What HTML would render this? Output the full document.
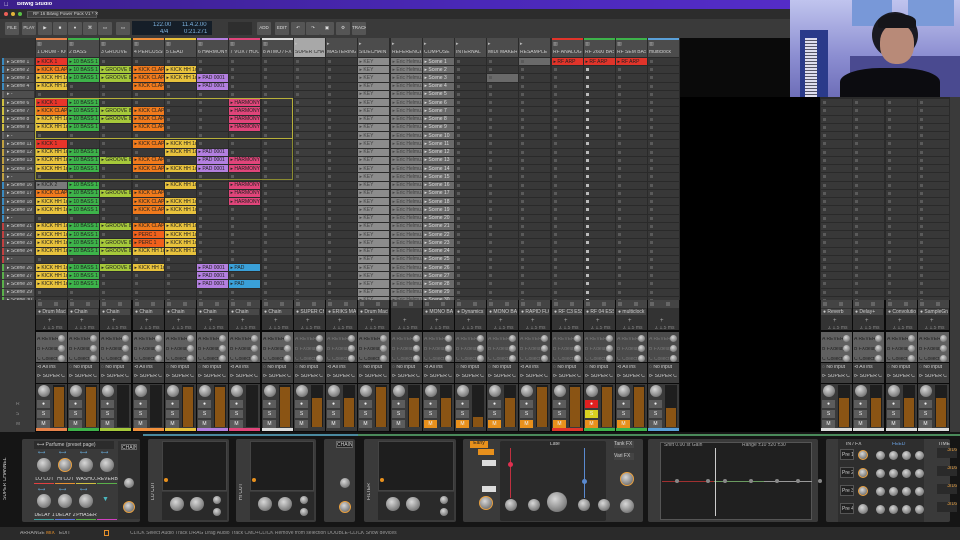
<!DOCTYPE html>
<html><head><meta charset="utf-8">
<style>
*{margin:0;padding:0;box-sizing:border-box}
body{width:960px;height:540px;overflow:hidden;background:#0a0a0a;font-family:"Liberation Sans",sans-serif;color:#ddd;position:relative}
.a{position:absolute}
.t{font-size:5px;white-space:nowrap;overflow:hidden;line-height:1}
.knob{position:absolute;border-radius:50%;background:radial-gradient(circle at 40% 35%,#d8d8d8,#8a8a8a 60%,#555);}
</style></head><body>
<!-- menu bar -->
<div class="a" style="left:0;top:0;width:960px;height:9px;background:linear-gradient(90deg,#3b1f8a,#4a28b8 50%,#5a2fd0)"></div>
<div class="a t" style="left:4px;top:2px;font-size:6px;color:#fff">&#63743;</div>
<div class="a t" style="left:17px;top:2px;font-size:5.5px;color:#fff;font-weight:bold">Bitwig Studio</div>
<div class="a" style="left:0;top:9px;width:790px;height:10px;background:#2c2c2c"></div>
<div class="a" style="left:4px;top:12px;width:4px;height:4px;border-radius:50%;background:#ec5f57"></div>
<div class="a" style="left:11px;top:12px;width:4px;height:4px;border-radius:50%;background:#e0b43a"></div>
<div class="a" style="left:18px;top:12px;width:4px;height:4px;border-radius:50%;background:#5bc246"></div>
<div class="a" style="left:27px;top:11px;width:70px;height:7px;background:#3e3e3e;border:1px solid #555"></div>
<div class="a t" style="left:33px;top:12px;font-size:4.5px;color:#ccc">RF 16 Bitwig Power Pack V1 *  ✕</div>
<!-- toolbar -->
<div class="a" style="left:0;top:19px;width:790px;height:19px;background:#3a3a3a"></div>
<div id="tb"></div>
<div class="a" style="left:132px;top:21px;width:80px;height:14px;background:#151e28"></div>
<div class="a t" style="left:153px;top:22px;font-size:6px;color:#7fb4e0">122.00</div>
<div class="a t" style="left:160px;top:29px;font-size:6px;color:#7fb4e0">4/4</div>
<div class="a t" style="left:182px;top:22px;font-size:6px;color:#7fb4e0">11.4.2.00</div>
<div class="a t" style="left:184px;top:29px;font-size:6px;color:#7fb4e0">0:21.271</div>
<!-- video -->
<div class="a" style="left:790px;top:0;width:170px;height:97px;background:linear-gradient(180deg,#c0c4ee,#8a8cd0 60%,#6e6eb8);overflow:hidden">
 <div class="a" style="left:62px;top:0;width:40px;height:26px;background:#7898d8"></div>
 <div class="a" style="left:118px;top:0;width:46px;height:26px;background:#7a9ad8"></div>
 <div class="a" style="left:10px;top:30px;width:28px;height:67px;background:#2a3a8a"></div>
 <div class="a" style="left:15px;top:38px;width:12px;height:59px;background:repeating-linear-gradient(180deg,#dde 0 2px,#556 2px 3px)"></div>
 <div class="a" style="left:60px;top:56px;width:110px;height:41px;background:#4a4a90"></div>
 <div class="a" style="left:82px;top:12px;width:46px;height:46px;border-radius:50%;background:#1a1a22"></div>
 <div class="a" style="left:90px;top:24px;width:34px;height:40px;border-radius:45%;background:#b88a78"></div>
 <div class="a" style="left:88px;top:14px;width:38px;height:14px;border-radius:50% 50% 10% 10%;background:#15151a"></div>
 <div class="a" style="left:50px;top:68px;width:100px;height:35px;border-radius:40% 40% 0 0;background:#0c0c10"></div>
</div>
<!-- scene col -->
<div class="a" style="left:0;top:38px;width:35px;height:262px;background:#333"></div>
<div class="a" style="left:35px;top:38px;width:645px;height:262px;background:#2a2a2a"></div>
<div class="a" style="left:820px;top:97px;width:130px;height:203px;background:#2a2a2a"></div>
<div class="a" style="left:950px;top:97px;width:10px;height:336px;background:#3a3a3a"></div>
<div id="g"></div>
<div class="a" style="left:35px;top:98px;width:258px;height:41px;border:1px solid #b8b03a"></div>
<div class="a" style="left:35px;top:139px;width:258px;height:41px;border:1px solid #8a8a30;border-top:none"></div>
<!-- mixer -->
<div class="a" style="left:0;top:300px;width:35px;height:132px;background:#3a3a3a"></div>
<div class="a t" style="left:16px;top:402px;color:#888">R</div>
<div class="a t" style="left:16px;top:412px;color:#888">S</div>
<div class="a t" style="left:16px;top:422px;color:#888">M</div>
<div id="mx"></div>
<!-- device panel -->
<div class="a" style="left:0;top:432px;width:960px;height:95px;background:#151515"></div>
<div class="a" style="left:143px;top:434px;width:215px;height:2px;background:#4a8aa0"></div>
<div class="a" style="left:358px;top:434px;width:602px;height:2px;background:#4a8a5a"></div>
<div class="a t" style="left:3px;top:470px;transform:rotate(-90deg);transform-origin:left top;top:500px;color:#ccc">SUPER CHANNEL</div>
<div id="dv"></div>
<!-- status bar -->
<div class="a" style="left:0;top:527px;width:960px;height:13px;background:#2a2a2a"></div>
<div class="a t" style="left:20px;top:531px;color:#aaa">ARRANGE</div>
<div class="a t" style="left:46px;top:531px;color:#e8912a">MIX</div>
<div class="a t" style="left:59px;top:531px;color:#aaa">EDIT</div>
<div class="a" style="left:104px;top:530px;width:5px;height:6px;border:1px solid #e8912a"></div>
<div class="a t" style="left:130px;top:531px;color:#999">CLICK  Select Audio Track     DRAG  Drag Audio Track     CMD+CLICK  Remove from selection     DOUBLE-CLICK  Show devices</div>
<script>
function d(p,x,y,w,h,bg,extra,txt){var e=document.createElement('div');e.className='a'+(txt!==undefined?' t':'');e.style.cssText='left:'+x+'px;top:'+y+'px;width:'+w+'px;height:'+h+'px;'+(bg?'background:'+bg+';':'')+(extra||'');if(txt!==undefined)e.textContent=txt;p.appendChild(e);return e}
function kn(p,x,y,s,ring){var e=d(p,x,y,s,s,null,ring?'border:1.5px solid '+ring:'');e.className='knob';return e}
var tb=document.getElementById('tb');
[[5,'FILE'],[22,'PLAY'],[38,'▶'],[53,'■'],[68,'●'],[83,'⌘'],[98,'▭'],[116,'▭'],[257,'ADD'],[275,'EDIT'],[291,'↶'],[306,'↷'],[320,'▣'],[336,'⚙'],[352,'TRACK']].forEach(function(b){d(tb,b[0],22,14,13,'#555','font-size:4.5px;color:#ddd;text-align:center;padding-top:4px;border-radius:1px',b[1])});
d(tb,228,22,24,13,'#2e2e2e');
var C={r:'#e8342a',o:'#f07a1c',y:'#e8c23c',g:'#3db34a',l:'#a6c93a',p:'#b37fe0',k:'#e0457a',b:'#3aa0d8',x:'#7a7a7a',q:'#f0601c'};
var N={r:'KICK 1',o:'KICK CLAP',y:'KICK HH 1d',g:'10 BASS 1',l:'GROOVE 8',p:'PAD 0001',k:'HARMONY',b:'PAD',x:'KICK 2',q:'PERC 1'};
var cols=[[35,'1 DRUM - KICK','#e8834a'],[67,'2 BASS','#3db34a'],[99,'3 GROOVE','#a6c93a'],[132,'4 PERCUSSION','#f2913c'],[164,'5 LEAD','#e8c23c'],[196,'6 HARMONY','#b37fe0'],[228,'7 VOX / HOOK','#e0457a'],[261,'8 ATMO / FX','#ddd'],[293,'SUPER CHAN',''],[325,'MASTERING',''],[357,'SIDECHAIN',''],[390,'REFERENCES',''],[422,'COMPOSE',''],[454,'INTERNAL',''],[486,'MIDI MAKER',''],[518,'RESAMPLE',''],[551,'RF ANALOG F','#e0342a'],[583,'RF 2600 BASS','#3db34a'],[615,'RF SEM BASS','#3db34a'],[647,'multiclock','#5aa0d8']];
var data=["royy.royy.ryyy.xoyy.yyyy.yyy..","ggg..gggg..ggg.gggg.gggg.ggg..",".ll...ll....l...l...l.ll.l....",".ooo..ooo.o.oo..ooo.oqqy.y....",".yy.......yy.y.y.yy.yyyy......","..pp.......ppp...........ppp..",".....kkkk...kk.kkk.......b.b.."];
var g=document.getElementById('g');var RH=8.24,R0=57.5;
var stripe=['#3a8ac0','#3a8ac0','#3a8ac0','#3a8ac0','#666','#d0c040','#d0c040','#d0c040','#d0c040','#666'];
for(var r=0;r<30;r++){var y=R0+r*RH;
 d(g,2,y+0.5,32,RH-1,'#4e4e4e');d(g,2,y+0.5,1.5,RH-1,r<10?stripe[r]:(r<15?'#c0a040':r<20?'#3a8ac0':r<25?'#c04040':'#5ab04a'));
 d(g,7,y+2,30,5,null,'color:#ccc',(r==4||r==9||r==14||r==19||r==24)?'▸  -':'▸  Scene '+(r+1));}
cols.forEach(function(c,i){var x=c[0],w=(i==7?32:32);
 d(g,x+0.5,38,w-1,19,i==8?'#a8a8a8':'#4c4c4c');
 if(c[2])d(g,x+0.5,38,w-1,2,c[2]);
 d(g,x+2,42,6,5,null,'color:#bbb',i<8||i>15?'▥':'▸');
 d(g,x+2,50,w-3,5,null,'color:'+(i==8?'#333':'#ccc'),c[1]);
 for(var r=0;r<30;r++){var y=R0+r*RH,bg='#383838',txt='',col='#222';
  var ch=i<7?data[i][r]:'.';
  if(ch!='.'){bg=C[ch];txt='▸ '+N[ch];}
  if(i==10){bg='#8c8c8c';txt='▸ KEY';col='#444'}
  if(i==11){bg='#7c7c7c';txt='▸ Eric Helmu...';col='#444'}
  if(i==12){bg='#6a6a6a';txt='▸ Scene '+(r+1);col='#ddd'}
  if(i>=16&&i<=18&&r==0){bg='#e0342a';txt='▸ RF ARP';}
  if(i==15&&r==0)bg='#6a6a6a';if(i==14&&r==2)bg='#6a6a6a';
  if(i==8)bg='#3c3c3c';
  var e=d(g,x+0.5,y+0.5,w-1,RH-1,bg,'color:'+col+';padding:1.5px 0 0 2px',txt);
  if(!txt)d(g,x+3,y+2.5,3,3,i==17?'#bbb':'#5a5a5a');}
});
[[820,'Reverb'],[852,'Delay+'],[885,'Convolution'],[917,'SampleGrabber']].forEach(function(c){for(var r=5;r<30;r++){var y=R0+r*RH;d(g,c[0]+0.5,y+0.5,31,RH-1,'#383838');d(g,c[0]+3,y+2.5,3,3,'#5a5a5a')}});
// mixer
var mx=document.getElementById('mx');
var mcols=cols.map(function(c){return c}).concat([[820,'Reverb','#ddd'],[852,'Delay+','#ddd'],[885,'Convolution','#ddd'],[917,'SampleGrabber','#ddd']]);
var meters=[.95,.95,0,0,.95,.95,0,.95,.7,.7,.95,.7,.7,.25,.7,.95,.95,.95,.95,.45,.7,.7,.7,.7];
var devs=['Drum Machine','Chain','Chain','Chain','Chain','Chain','Chain','Chain','SUPER CHAN','ERIKS MAS','Drum Machine','','MONO BASS','Dynamics','MONO BASS','RAPID FLOW','RF C3 ESSEN','RF 04 ESSEN','multiclock','','Reverb','Delay+','Convolution','SampleGrab'];
mcols.forEach(function(c,i){var x=c[0];
 var light=(i<8||i==10||i>=20);
 d(mx,x+0.5,300,31,8,'#444');d(mx,x+3,302,4,4,'#666');d(mx,x+19,302,4,4,'#666');
 d(mx,x+0.5,308,31,22,'#333');
 if(devs[i])d(mx,x+1,309,30,6,'#484848','color:#ccc;padding:0.5px 0 0 2px','● '+devs[i]);
 d(mx,x+13,318,6,6,null,'color:#aaa;font-size:6px','+');
 d(mx,x+8,326,20,5,null,'color:#888','Σ 1.5 ms');
 d(mx,x+0.5,332,31,30,light?'#606060':'#4a4a4a');
 ['A REVERB','B FXdelay','C Collect'].forEach(function(s,k){d(mx,x+2,337+k*10,22,5,null,'color:'+(light?'#222':'#777'),s);kn(mx,x+23,335+k*10,7)});
 d(mx,x+0.5,363,31,20,'#3e3e3e');
 d(mx,x+2,365,28,5,null,'color:#ccc',i%3?'◌ No input':'⊲ All ins');
 d(mx,x+2,374,28,5,null,'color:#ccc','⊳ SUPER C...');
 d(mx,x+0.5,384,31,44,'#3a3a3a');
 kn(mx,x+3,385,12);
 d(mx,x+2,400,13,8,'#5c5c5c','color:#eee;text-align:center;padding-top:1.5px',i==17?'●':'●').style.background=i==17?'#e02020':'#5c5c5c';
 d(mx,x+2,410,13,8,i==17?'#d8d020':'#5c5c5c','color:#eee;text-align:center;padding-top:1.5px','S');
 var mo=(i>=12&&i<=18)||i==15;
 d(mx,x+2,420,13,8,mo?'#e8901c':'#5c5c5c','color:#eee;text-align:center;padding-top:1.5px','M');
 d(mx,x+18,385,12,42,'#1e1e1e');
 var m=meters[i]||0;if(m)d(mx,x+19,385+42*(1-m),10,42*m,'#8a5414');
 d(mx,x+0.5,428,31,3,c[2]||'#3a3a3a');
});
d(mx,680,97,140,335,'#000');
// devices
var dv=document.getElementById('dv');
function box(x,w,bg){return d(dv,x,439,w,83,bg||'#3a3a3a','border-radius:2px')}
box(22,118);d(dv,34,441,80,8,'#2c2c2c','color:#ccc;padding:1.5px 0 0 3px','⟷ Parfume (preset page)');
['LO CUT','HI CUT','WASHO..','REVERB'].forEach(function(s,k){var x=34+k*21;d(dv,x+4,451,10,4,null,'color:#6ab0e0','⟷');kn(dv,x+3,458,14,k==1?'#e8a040':null);d(dv,x,477,21,5,null,'color:#ddd;text-align:center',s);d(dv,x,483,20,1,['#e04040','#e89030','#d0c040','#5ab04a'][k])});
['DELAY 1','DELAY 2','PHASER',''].forEach(function(s,k){var x=34+k*21;if(s){d(dv,x+4,488,10,4,null,'color:#6ab0e0','⟷');kn(dv,x+3,494,14);d(dv,x,513,21,5,null,'color:#ddd;text-align:center',s)}else d(dv,x+5,496,10,6,null,'color:#4ab8c0;font-size:7px','▼');d(dv,x,519,20,1,['#40a0a0','#5a7ae0','#5ab04a','#d040c0'][k])});
d(dv,118,441,22,78,'#303030');d(dv,121,444,16,6,'#222','color:#ccc;border:1px solid #666;text-align:center;padding-top:0.5px','CHAIN');kn(dv,124,478,10);kn(dv,123,501,12,'#e8a040');
function eq(x,w,lbl){box(x,w);d(dv,x+2,442,8,40,null,'');d(dv,x+14,441,w-16,50,'#1e1e1e','border:1px solid #444');d(dv,x+14,492,w-16,28,'#2a2a2a');kn(dv,x+22,497,14);kn(dv,x+42,497,14);kn(dv,x+w-16,496,8);kn(dv,x+w-16,508,8);d(dv,x+16,478,4,4,'#e8901c','border-radius:50%');var l=d(dv,x+3,500,40,5,null,'color:#ccc;transform:rotate(-90deg);transform-origin:left top',lbl)}
eq(148,81,'LO CUT');eq(236,80,'HI CUT');
box(324,31);d(dv,336,441,17,7,'#222','color:#ccc;border:1px solid #666;text-align:center;padding-top:1px','CHAIN');kn(dv,340,478,10);kn(dv,339,501,12,'#e8a040');
eq(364,92,'FILTER');
box(463,180);d(dv,470,441,18,7,'#e8901c','color:#222;text-align:center','Early');d(dv,478,449,16,6,'#e8901c');d(dv,482,460,14,6,'#ddd');d(dv,482,486,14,6,'#ddd');
d(dv,500,441,106,80,'#2a2a2a','border-radius:2px');d(dv,550,442,20,5,null,'color:#ccc','Late');
d(dv,510,448,1,50,'#c03040');d(dv,508,462,5,5,'#e03050','border-radius:50%');d(dv,584,448,1,50,'#5a8ad0');d(dv,582,479,5,5,'#5a8ad0','border-radius:50%');
kn(dv,505,499,12);kn(dv,528,499,12);kn(dv,547,492,20);kn(dv,578,499,12);kn(dv,598,499,12);
kn(dv,479,496,14,'#e8a040');d(dv,614,441,20,7,'#444','color:#ccc;padding-top:1px','Tank FX');d(dv,614,453,20,7,'#444','color:#ccc;padding-top:1px','Vari FX');kn(dv,620,472,14,'#e8a040');kn(dv,620,499,14);
box(648,170);d(dv,660,442,152,78,'#202020','border:1px solid #555');d(dv,662,481,52,1,'#a03030');d(dv,714,481,50,1,'#6a9a60');d(dv,764,481,48,1,'#999');d(dv,715,448,1,68,'#ccc');
[683,714,731,757,783,804,826,850].forEach(function(px,k){d(dv,px+648-670+14,479,4,4,'#888','border-radius:50%')});
d(dv,664,443,40,5,null,'color:#aaa','Shift  0.00 st        Gain 0.0 dB');d(dv,742,443,70,5,null,'color:#aaa','Range  ±10  ±20  ±30');
box(826,124);d(dv,838,439,86,83,'#2e2e2e');d(dv,846,442,20,5,null,'color:#ccc','IN / FX');d(dv,892,442,20,5,null,'color:#6aa0e0','FEED');d(dv,938,442,20,5,null,'color:#ccc','TIME');
for(var k=0;k<4;k++){d(dv,840,449+k*18,14,11,'#222','color:#ccc;border:1px solid #555;padding:3px 0 0 1px','Pre '+(k+1));kn(dv,858,450+k*18,10,k<3?'#e8a040':null);for(var j=0;j<4;j++)kn(dv,876+j*13,451+k*18,9);d(dv,937,448+k*18,20,10,'#2a2a2a','color:#e8a040;text-align:right','3/16')}
</script>
</body></html>
